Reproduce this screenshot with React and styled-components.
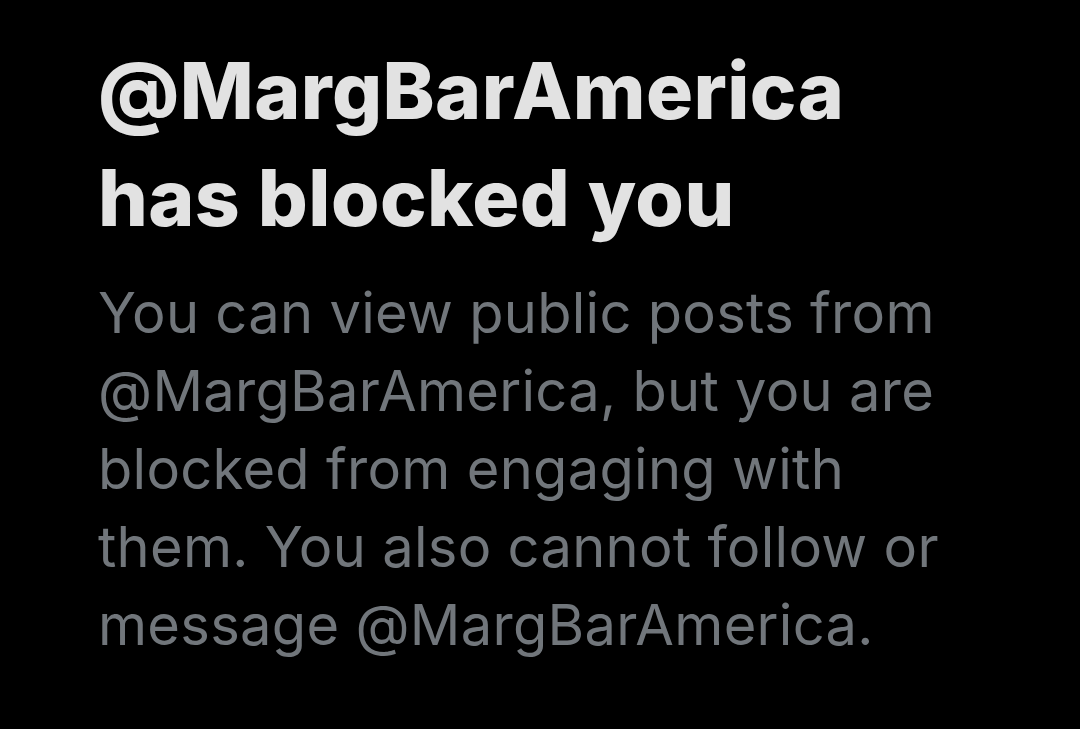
import styled, { createGlobalStyle } from "styled-components";

const GlobalStyle = createGlobalStyle`
  html, body {
    margin: 0;
    padding: 0;
    background: #000;
  }
`;

export default function App() {
  return (
    <>
      <GlobalStyle />
      <Page>
        <Notice>
          <Title>@MargBarAmerica has blocked you</Title>
          <Body>
            You can view public posts from @MargBarAmerica, but you are blocked
            from engaging with them. You also cannot follow or message
            @MargBarAmerica.
          </Body>
        </Notice>
      </Page>
    </>
  );
}

const Page = styled.main`
  width: 1080px;
  height: 729px;
  background: #000;
  box-sizing: border-box;
  padding: 37px 0 0 98px;
  overflow: hidden;
`;

const Notice = styled.section`
  display: flex;
  flex-direction: column;
  gap: 23px;
  width: 900px;
  font-family: Inter, "Noto Sans", sans-serif;
`;

const Title = styled.h1`
  margin: 0;
  width: 780px;
  font-size: 78.5px;
  line-height: 107px;
  font-weight: 800;
  letter-spacing: 0.4px;
  color: #e2e2e2;
`;

const Body = styled.p`
  margin: 0;
  font-size: 56px;
  line-height: 78px;
  font-weight: 400;
  letter-spacing: 0.3px;
  color: #71767b;
`;
